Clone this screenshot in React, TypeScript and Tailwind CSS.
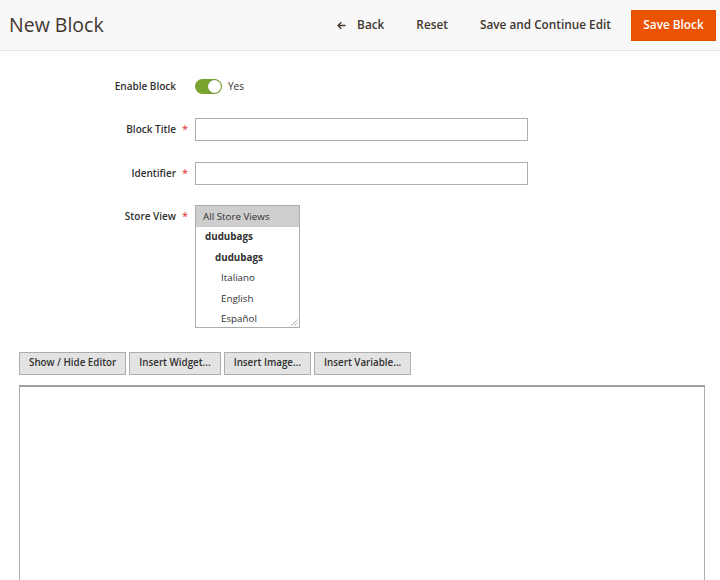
import { useState } from 'react';

const storeViews = [
  { label: 'All Store Views', cls: 'pl-[7px] bg-[#cecece]' },
  { label: 'dudubags', cls: 'pl-[9px] font-bold' },
  { label: 'dudubags', cls: 'pl-[19px] font-bold' },
  { label: 'Italiano', cls: 'pl-[25px]' },
  { label: 'English', cls: 'pl-[25px]' },
  { label: 'Español', cls: 'pl-[25px]' },
];

const editorButtons = ['Show / Hide Editor', 'Insert Widget...', 'Insert Image...', 'Insert Variable...'];

function FieldLabel({ text, required }: { text: string; required?: boolean }) {
  return (
    <>
      <div className="w-[176px] text-right text-[10px] font-semibold text-[#303030]">{text}</div>
      <div className="w-[19px] pl-[6px] text-[11px] text-[#e22626]">{required ? '*' : ''}</div>
    </>
  );
}

export default function App() {
  const [enabled, setEnabled] = useState(true);

  return (
    <div className="min-h-[580px] bg-white text-[#41362f]" style={{ fontFamily: '"Open Sans", "Liberation Sans", sans-serif' }}>
      {/* Page header */}
      <div className="h-[51px] bg-[#f8f8f8] border-b border-[#e3e3e3] flex items-center pl-[9px] pr-[4px]">
        <h1 className="text-[19.5px] leading-none text-[#41362f] flex-1">New Block</h1>
        <div className="flex items-center text-[11.8px] font-semibold text-[#41362f]">
          <button className="flex items-center gap-[11px]">
            <svg width="9" height="9" viewBox="0 0 9 9" fill="none" stroke="#41362f" strokeWidth="1.3">
              <path d="M8.5 4.5H1.2M4.3 1.2L1 4.5L4.3 7.8" />
            </svg>
            Back
          </button>
          <button className="ml-[32px]">Reset</button>
          <button className="ml-[32px]">Save and Continue Edit</button>
          <button className="ml-[20px] h-[31px] w-[85px] bg-[#eb5202] text-white border border-[#e04f01]">
            Save Block
          </button>
        </div>
      </div>

      {/* Form */}
      <div className="pt-[24px]">
        <div className="flex items-center h-[23px]">
          <FieldLabel text="Enable Block" />
          <button
            onClick={() => setEnabled(!enabled)}
            className={`relative w-[27px] h-[15px] rounded-full ${enabled ? 'bg-[#79a22e]' : 'bg-[#e3e3e3]'}`}
          >
            <span className={`absolute top-[1px] w-[13px] h-[13px] rounded-full bg-white shadow-[0_0_1px_rgba(0,0,0,0.4)] ${enabled ? 'right-[1px]' : 'left-[1px]'}`} />
          </button>
          <span className="ml-[6px] text-[10px] text-[#303030]">{enabled ? 'Yes' : 'No'}</span>
        </div>

        <div className="flex items-center mt-[20px]">
          <FieldLabel text="Block Title" required />
          <input className="w-[333px] h-[23px] border border-[#adadad] bg-white outline-none" />
        </div>

        <div className="flex items-center mt-[21px]">
          <FieldLabel text="Identifier" required />
          <input className="w-[333px] h-[23px] border border-[#adadad] bg-white outline-none" />
        </div>

        <div className="flex items-start mt-[20px]">
          <div className="flex items-center h-[23px]">
            <FieldLabel text="Store View" required />
          </div>
          <div className="relative w-[105px] h-[123px] border border-[#adadad] bg-white overflow-hidden">
            {storeViews.map((v, i) => (
              <div key={i} className={`h-[20.5px] pt-[2px] flex items-center text-[9.8px] text-[#303030] ${v.cls}`}>
                {v.label}
              </div>
            ))}
            <svg className="absolute right-[1px] bottom-[1px]" width="7" height="7" viewBox="0 0 7 7" stroke="#9a9a9a" strokeWidth="0.8">
              <path d="M6.5 0.5L0.5 6.5M6.5 3.5L3.5 6.5" />
            </svg>
          </div>
        </div>
      </div>

      {/* Editor */}
      <div className="px-[19px] mt-[24px]">
        <div className="flex gap-[3px]">
          {editorButtons.map((b) => (
            <button
              key={b}
              className="h-[23px] px-[9px] bg-[#e3e3e3] border border-[#adadad] text-[9.8px] font-semibold text-[#303030]"
            >
              {b}
            </button>
          ))}
        </div>
        <div className="mt-[10px] w-[686px] h-[300px] border border-[#adadad] border-t-2 border-t-[#a0a0a0] bg-white" />
      </div>
    </div>
  );
}
